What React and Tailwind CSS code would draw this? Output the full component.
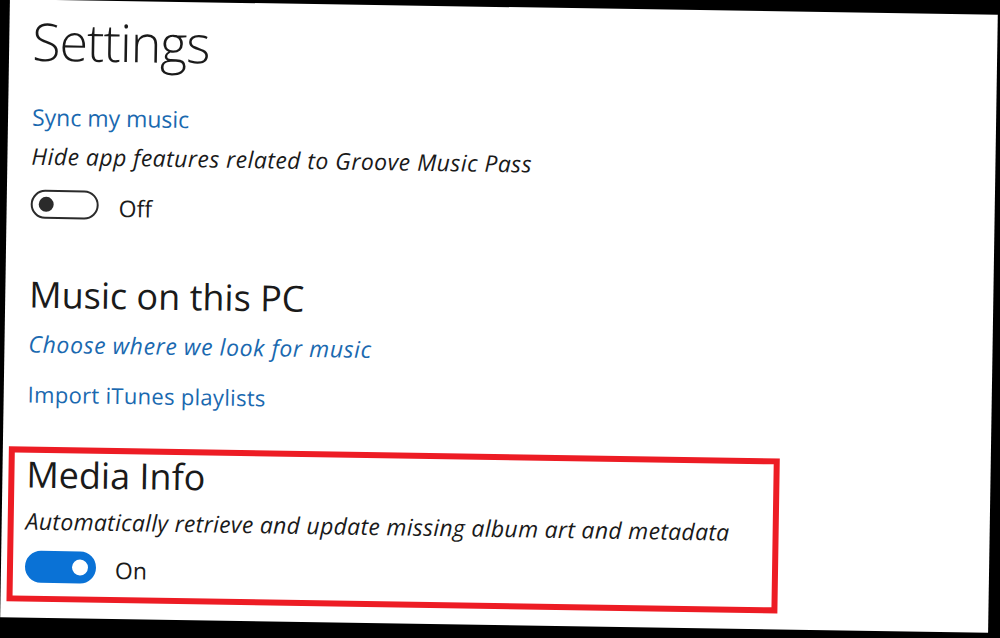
export default function App() {
  return (
    <div className="w-[1000px] h-[638px] bg-black overflow-hidden pl-[5px] pt-[7px] font-['Open_Sans',sans-serif] text-[#1a1a1a]">
      <div className="w-[988px] h-[618px] bg-white rotate-[0.9deg] pl-[24px] pt-[11px] flex flex-col items-start">
        <h1 className="text-[52px] leading-[60px] font-light tracking-[-1px] -ml-[1px]">Settings</h1>

        <a className="mt-[31px] text-[23px] leading-[30px] text-[#1a69b0]">Sync my music</a>
        <p className="mt-[9px] text-[23px] leading-[30px] italic tracking-[0.45px]">
          Hide app features related to Groove Music Pass
        </p>
        <div className="mt-[19px] flex items-start gap-[20px]">
          <div className="w-[68px] h-[29px] rounded-full border-[2.5px] border-[#2b2b2b] flex items-center pl-[6px]">
            <div className="w-[15px] h-[15px] rounded-full bg-[#2b2b2b]" />
          </div>
          <span className="pt-[4px] text-[23px] leading-[26px]">Off</span>
        </div>

        <h2 className="mt-[53px] text-[36px] leading-[44px]">Music on this PC</h2>
        <a className="mt-[12px] text-[23px] leading-[30px] italic tracking-[0.6px] text-[#1a69b0]">
          Choose where we look for music
        </a>
        <a className="mt-[20px] text-[22px] leading-[30px] tracking-[0.3px] text-[#1a69b0]">
          Import iTunes playlists
        </a>

        <div className="-ml-[18px] mt-[38px] w-[771px] h-[155px] border-[6px] border-[#ed1c24] pl-[12px] pt-[2px] flex flex-col items-start">
          <h2 className="text-[36px] leading-[40px]">Media Info</h2>
          <p className="mt-[11px] text-[23px] leading-[30px] italic tracking-[0.3px]">
            Automatically retrieve and update missing album art and metadata
          </p>
          <div className="mt-[15px] flex items-start gap-[19px]">
            <div className="w-[71px] h-[32px] rounded-full bg-[#0a72d6] flex items-center justify-end pr-[8px]">
              <div className="w-[16px] h-[16px] rounded-full bg-white" />
            </div>
            <span className="pt-[5px] text-[23px] leading-[26px]">On</span>
          </div>
        </div>
      </div>
    </div>
  );
}
